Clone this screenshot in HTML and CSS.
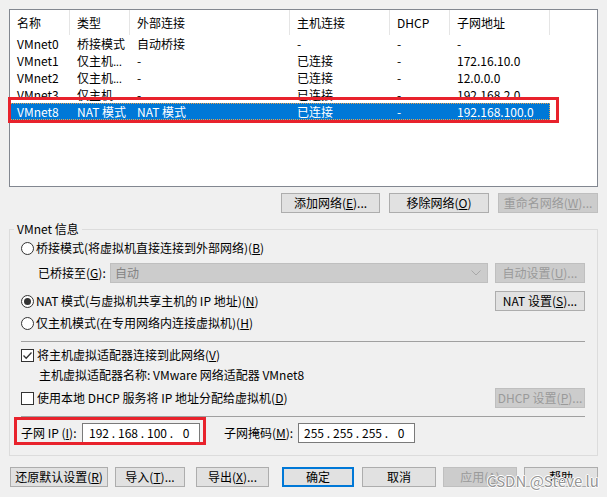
FILE: index.html
```html
<!DOCTYPE html>
<html lang="zh-CN">
<head>
    <meta charset="UTF-8">
    <title>虚拟网络编辑器</title>
    <link rel="stylesheet" href="styles.css">
</head>
<body>
    <div class="dialog">
        <div class="netlist">
            <div class="list-head">
                <span class="cell c-name">名称</span>
                <span class="cell c-type">类型</span>
                <span class="cell c-ext">外部连接</span>
                <span class="cell c-host">主机连接</span>
                <span class="cell c-dhcp">DHCP</span>
                <span class="cell c-subnet">子网地址</span>
            </div>
            <div class="list-row">
                <span class="cell c-name">VMnet0</span>
                <span class="cell c-type">桥接模式</span>
                <span class="cell c-ext">自动桥接</span>
                <span class="cell c-host">-</span>
                <span class="cell c-dhcp">-</span>
                <span class="cell c-subnet">-</span>
            </div>
            <div class="list-row">
                <span class="cell c-name">VMnet1</span>
                <span class="cell c-type">仅主机<span class="ell">...</span></span>
                <span class="cell c-ext">-</span>
                <span class="cell c-host">已连接</span>
                <span class="cell c-dhcp">-</span>
                <span class="cell c-subnet">172.16.10.0</span>
            </div>
            <div class="list-row">
                <span class="cell c-name">VMnet2</span>
                <span class="cell c-type">仅主机<span class="ell">...</span></span>
                <span class="cell c-ext">-</span>
                <span class="cell c-host">已连接</span>
                <span class="cell c-dhcp">-</span>
                <span class="cell c-subnet">12.0.0.0</span>
            </div>
            <div class="list-row">
                <span class="cell c-name">VMnet3</span>
                <span class="cell c-type">仅主机<span class="ell">...</span></span>
                <span class="cell c-ext">-</span>
                <span class="cell c-host">已连接</span>
                <span class="cell c-dhcp">-</span>
                <span class="cell c-subnet">192.168.2.0</span>
            </div>
            <div class="list-row selected">
                <span class="cell c-name">VMnet8</span>
                <span class="cell c-type">NAT 模式</span>
                <span class="cell c-ext">NAT 模式</span>
                <span class="cell c-host">已连接</span>
                <span class="cell c-dhcp">-</span>
                <span class="cell c-subnet">192.168.100.0</span>
            </div>
        </div>

        <div class="list-actions">
            <button class="btn w-99">添加网络(<u>E</u>)...</button>
            <button class="btn w-100">移除网络(<u>O</u>)</button>
            <button class="btn w-100 is-disabled">重命名网络(<u>W</u>)...</button>
        </div>

        <fieldset class="group">
            <legend>VMnet 信息</legend>

            <div class="opt-row">
                <span class="radio"></span>
                <span>桥接模式(将虚拟机直接连接到外部网络)(<u>B</u>)</span>
            </div>
            <div class="opt-row bridge-row">
                <span class="bridge-label">已桥接至(<u>G</u>):</span>
                <div class="combo">
                    <span>自动</span>
                    <svg width="10" height="6" viewBox="0 0 10 6"><path d="M0.5 0.5 L5 5 L9.5 0.5" fill="none" stroke="#a8a8a8" stroke-width="1"/></svg>
                </div>
                <button class="btn side-btn is-disabled">自动设置(<u>U</u>)...</button>
            </div>
            <div class="opt-row nat-row">
                <span class="radio on"></span>
                <span>NAT 模式(与虚拟机共享主机的 IP 地址)(<u>N</u>)</span>
                <button class="btn side-btn">NAT 设置(<u>S</u>)...</button>
            </div>
            <div class="opt-row host-row">
                <span class="radio"></span>
                <span>仅主机模式(在专用网络内连接虚拟机)(<u>H</u>)</span>
            </div>

            <div class="rule"></div>

            <div class="opt-row check-row">
                <span class="check on">
                    <svg width="11" height="11" viewBox="0 0 11 11"><path d="M1.5 5.5 L4.2 8.3 L9.5 2.5" fill="none" stroke="#333" stroke-width="1.3"/></svg>
                </span>
                <span>将主机虚拟适配器连接到此网络(<u>V</u>)</span>
            </div>
            <div class="opt-row adapter-row">主机虚拟适配器名称: VMware 网络适配器 VMnet8</div>
            <div class="opt-row dhcp-row">
                <span class="check"></span>
                <span>使用本地 DHCP 服务将 IP 地址分配给虚拟机(<u>D</u>)</span>
                <button class="btn side-btn is-disabled">DHCP 设置(<u>P</u>)...</button>
            </div>

            <div class="rule rule-low"></div>

            <div class="opt-row subnet-row">
                <span class="ip-label">子网 IP (<u>I</u>):</span>
                <div class="ip-box">
                    <span class="oct">192</span><span class="dot">.</span>
                    <span class="oct">168</span><span class="dot">.</span>
                    <span class="oct">100</span><span class="dot">.</span>
                    <span class="oct">0</span>
                </div>
                <span class="mask-label">子网掩码(<u>M</u>):</span>
                <div class="ip-box mask-box">
                    <span class="oct">255</span><span class="dot">.</span>
                    <span class="oct">255</span><span class="dot">.</span>
                    <span class="oct">255</span><span class="dot">.</span>
                    <span class="oct">0</span>
                </div>
            </div>
        </fieldset>

        <div class="footer">
            <button class="btn w-98 first">还原默认设置(<u>R</u>)</button>
            <button class="btn w-70">导入(<u>T</u>)...</button>
            <button class="btn w-73 export">导出(<u>X</u>)...</button>
            <button class="btn w-72 is-default">确定</button>
            <button class="btn w-74">取消</button>
            <button class="btn w-74 is-disabled">应用(<u>A</u>)</button>
            <button class="btn w-74">帮助</button>
        </div>

        <!-- annotation boxes drawn over the dialog -->
        <div class="mark mark-row"></div>
        <div class="mark mark-ip"></div>
        <div class="watermark">CSDN @Steve lu</div>
    </div>
</body>
</html>
```

FILE: styles.css
```css
body {
    margin: 0;
    background: #f0f0f0;
    font-family: "Noto Sans CJK SC", "Noto Sans", sans-serif;
    font-size: 12px;
    line-height: 20px;
    color: #000;
}
u {
    text-decoration-thickness: 1px;
    text-underline-offset: 1px;
}
.dialog {
    position: relative;
    height: 497px;
    box-sizing: border-box;
    padding: 9px 9px 0 9px;
    overflow: hidden;
}

/* network list */
.netlist {
    height: 178px;
    box-sizing: border-box;
    border: 1px solid #828790;
    background: #fff;
}
.list-head {
    display: flex;
    height: 25px;
    line-height: 25px;
}
.list-head .cell {
    border-right: 1px solid #e5e5e5;
}
.list-row {
    display: flex;
    width: 540px;
    height: 17px;
    line-height: 17px;
}
.list-row.selected {
    background: #0078d7;
    color: #fff;
    outline: 1px dotted #e6a14a;
    outline-offset: -1px;
}
.cell {
    box-sizing: border-box;
    padding-left: 7px;
    white-space: nowrap;
    overflow: hidden;
}
.ell {
    font-family: "Liberation Sans", sans-serif;
    letter-spacing: -0.5px;
}
.c-name { width: 60px; }
.c-type { width: 60px; }
.c-ext { width: 160px; }
.c-host { width: 100px; }
.c-dhcp { width: 60px; }
.c-subnet { width: 100px; }

/* buttons */
.btn {
    height: 20px;
    box-sizing: border-box;
    border: 1px solid #adadad;
    background: #e1e1e1;
    font: inherit;
    line-height: 18px;
    color: #000;
    padding: 0;
    text-align: center;
    white-space: nowrap;
}
.btn.is-disabled {
    background: #cccccc;
    border-color: #bfbfbf;
    color: #9a9a9a;
}
.btn.is-default {
    border: 2px solid #0078d7;
    line-height: 16px;
}
.w-70 { width: 70px; }
.w-72 { width: 72px; }
.w-73 { width: 73px; }
.w-74 { width: 74px; }
.w-98 { width: 98px; }
.w-99 { width: 99px; }
.w-100 { width: 100px; }

.list-actions {
    display: flex;
    justify-content: flex-end;
    gap: 9px;
    margin-top: 6px;
}

/* VMnet info group */
.group {
    margin: 8px 0 0 0;
    padding: 1px 12px 12px 11px;
    border: 1px solid #dcdcdc;
    min-width: 0;
}
.group legend {
    padding: 0 3px;
    margin-left: -7px;
    line-height: 16px;
}
.opt-row {
    display: flex;
    align-items: center;
    height: 20px;
    white-space: nowrap;
}
.radio {
    width: 13px;
    height: 13px;
    box-sizing: border-box;
    border: 1px solid #333;
    border-radius: 50%;
    background: #fff;
    margin-right: 2px;
    position: relative;
    flex: none;
}
.radio.on::after {
    content: "";
    position: absolute;
    inset: 2px;
    border-radius: 50%;
    background: #333;
}
.check {
    width: 13px;
    height: 13px;
    box-sizing: border-box;
    border: 1px solid #333;
    background: #fff;
    margin-right: 3px;
    display: flex;
    flex: none;
}
.bridge-row {
    margin-top: 5px;
    padding-left: 17px;
}
.bridge-label {
    width: 72px;
}
.combo {
    width: 378px;
    height: 20px;
    box-sizing: border-box;
    border: 1px solid #bfbfbf;
    background: #cccccc;
    color: #838383;
    padding: 0 6px 0 4px;
    display: flex;
    align-items: center;
    justify-content: space-between;
}
.side-btn {
    width: 90px;
    margin-left: auto;
}
.nat-row { margin-top: 8px; }
.host-row { margin-top: 2px; }
.rule {
    height: 1px;
    background: #a0a0a0;
    margin-top: 8px;
}
.check-row { margin-top: 3px; }
.adapter-row { padding-left: 18px; }
.dhcp-row { margin-top: 3px; }
.subnet-row { margin-top: 6px; }
.ip-label { width: 61px; }
.ip-box {
    width: 118px;
    height: 20px;
    box-sizing: border-box;
    border: 1px solid #7a7a7a;
    background: #fff;
    display: flex;
    padding-left: 4px;
    line-height: 18px;
}
.mask-box { width: 117px; padding-left: 3px; }
.oct {
    width: 24px;
    text-align: center;
}
.dot {
    width: 5px;
    text-align: center;
}
.mask-label {
    margin-left: 24px;
    width: 74px;
}

/* bottom buttons */
.footer {
    display: flex;
    gap: 7px;
    margin-top: 11px;
}
.footer .first { margin-left: 1px; }
.footer .export { margin-left: 4px; }
.footer .is-default {
    margin-left: auto;
    margin-right: 1px;
}

/* red annotation frames */
.mark {
    position: absolute;
    border: 3px solid #e8222c;
    box-sizing: border-box;
}
.mark-row {
    left: 8px;
    top: 97px;
    width: 551px;
    height: 26px;
}
.mark-ip {
    left: 14px;
    top: 417px;
    width: 192px;
    height: 28px;
}
.watermark {
    position: absolute;
    left: 487px;
    top: 471px;
    font-family: "Noto Sans CJK SC", sans-serif;
    font-size: 15px;
    line-height: 20px;
    color: rgba(120, 120, 120, 0.8);
    text-shadow: 1px 0 0 #fff, -1px 0 0 #fff, 0 1px 0 #fff, 0 -1px 0 #fff;
}
```
